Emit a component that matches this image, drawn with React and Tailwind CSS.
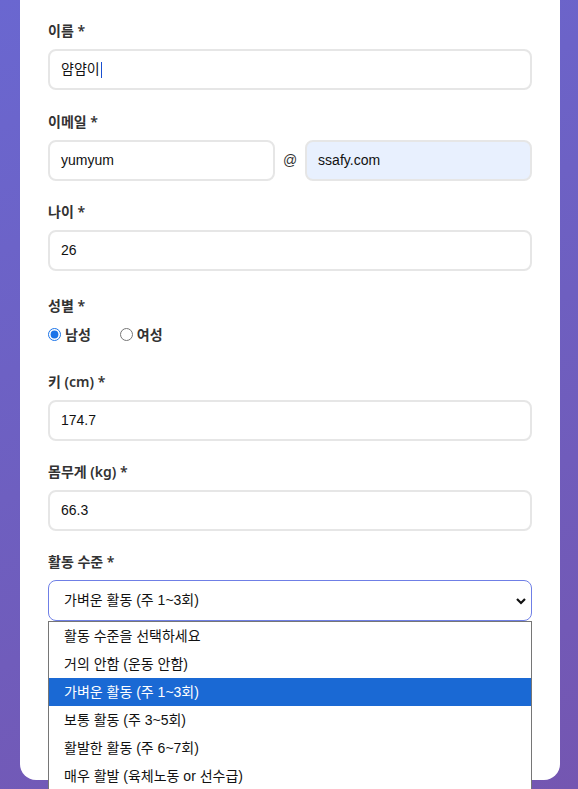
import React from "react";

const labelCls =
  "block text-[14px] leading-[20px] font-semibold text-[#333] mb-[8px] [font-family:'Noto_Sans','Noto_Sans_CJK_KR',sans-serif]";
const inputCls =
  "w-full h-[41px] rounded-[8px] border-2 border-[#e6e6e6] bg-white px-[11px] text-[14px] text-[#111] flex items-center [font-family:'Liberation_Sans','Noto_Sans_CJK_KR',sans-serif]";

function Field({ label, value, className = "" }) {
  return (
    <div className={className}>
      <div className={labelCls}>{label}</div>
      <div className={inputCls}>{value}</div>
    </div>
  );
}

const options = [
  "활동 수준을 선택하세요",
  "거의 안함 (운동 안함)",
  "가벼운 활동 (주 1~3회)",
  "보통 활동 (주 3~5회)",
  "활발한 활동 (주 6~7회)",
  "매우 활발 (육체노동 or 선수급)",
];

export default function App() {
  return (
    <div className="h-[789px] overflow-hidden bg-[linear-gradient(160deg,#6a67d0_0%,#6e5fc0_50%,#7456b1_100%)] px-[20px]">
      <div className="w-[540px] bg-white rounded-b-[16px] px-[28px] pt-[21px] pb-[159px]">
        <Field
          label="이름 *"
          value={
            <span className="flex items-center">
              얌얌이
              <span className="inline-block w-[1px] h-[16px] bg-[#1a4fd0] ml-[1px]" />
            </span>
          }
          className="mb-[22px]"
        />

        <div className="mb-[21px]">
          <div className={labelCls}>이메일 *</div>
          <div className="flex items-center gap-[8px]">
            <div className={inputCls}>yumyum</div>
            <span className="text-[14px] text-[#333] [font-family:'Liberation_Sans',sans-serif] shrink-0">@</span>
            <div className={inputCls + " !bg-[#e8f0fe]"}>ssafy.com</div>
          </div>
        </div>

        <Field label="나이 *" value="26" className="mb-[25px]" />

        <div className="mb-[28px]">
          <div className={labelCls}>성별 *</div>
          <div className="flex items-center h-[20px] gap-[29px] text-[14px] font-semibold text-[#333] [font-family:'Noto_Sans','Noto_Sans_CJK_KR',sans-serif]">
            <label className="flex items-center gap-[4px]">
              <input type="radio" name="g" defaultChecked className="m-0 w-[13px] h-[13px] accent-[#1a73e8]" />
              남성
            </label>
            <label className="flex items-center gap-[4px]">
              <input type="radio" name="g" className="m-0 w-[13px] h-[13px]" />
              여성
            </label>
          </div>
        </div>

        <Field label="키 (cm) *" value="174.7" className="mb-[21px]" />
        <Field label="몸무게 (kg) *" value="66.3" className="mb-[21px]" />

        <div>
          <div className={labelCls}>활동 수준 *</div>
          <div className="relative">
            <div className="w-full h-[41px] rounded-[8px] border border-[#6f7fe6] bg-white pl-[15px] pr-[4px] flex items-center justify-between text-[14px] text-[#111] [font-family:'Liberation_Sans','Noto_Sans_CJK_KR',sans-serif]">
              <span>가벼운 활동 (주 1~3회)</span>
              <svg width="12" height="12" viewBox="0 0 12 12" className="mt-[1px]">
                <path d="M2 4 L6 8 L10 4" fill="none" stroke="#111" strokeWidth="2.2" />
              </svg>
            </div>
            <div className="absolute left-0 right-0 top-[41px] bg-white border border-[#767676] text-[14px] text-[#111] [font-family:'Liberation_Sans','Noto_Sans_CJK_KR',sans-serif] z-10">
              {options.map((o, i) => (
                <div
                  key={o}
                  className={
                    "h-[28px] flex items-center pl-[15px] " +
                    (i === 2 ? "bg-[#1a69d4] text-white" : "")
                  }
                >
                  {o}
                </div>
              ))}
            </div>
          </div>
        </div>
      </div>
    </div>
  );
}
